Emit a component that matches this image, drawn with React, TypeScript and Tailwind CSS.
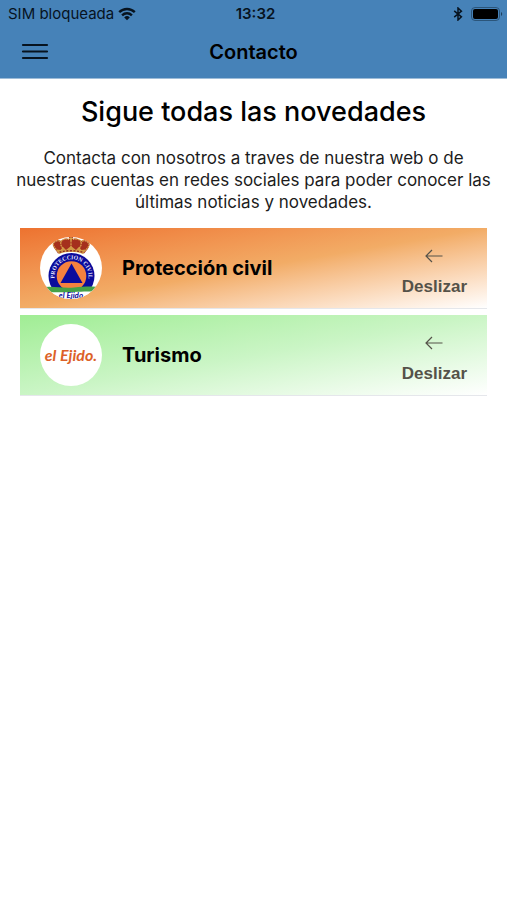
import { useState, type ReactNode } from 'react'

interface Canal {
  id: string
  nombre: string
  fondo: string
  logo: ReactNode
}

function IconoWifi() {
  return (
    <svg viewBox="0 0 18 14" className="h-[14px] w-[18px]" fill="none" stroke="#07131f" strokeWidth="2.4">
      <path d="M1.2 5.2C5.6.9 12.4.9 16.8 5.2" />
      <path d="M4.1 8.3c2.8-2.7 7-2.7 9.8 0" />
      <path d="M9 13.2 6.2 10.4a4 4 0 0 1 5.6 0Z" fill="#07131f" stroke="none" />
    </svg>
  )
}

function IconoBluetooth() {
  return (
    <svg viewBox="0 0 10 14" className="h-[14px] w-[10px]" fill="none" stroke="#07131f" strokeWidth="1.5">
      <path d="m1.2 3.8 7.2 6L5 13V1l3.4 3.2-7.2 6" />
    </svg>
  )
}

function IconoBateria() {
  return (
    <svg viewBox="0 0 32 14" className="h-[14px] w-8">
      <rect x="0.5" y="0.5" width="28" height="13" rx="3.5" fill="none" stroke="#20425f" strokeOpacity="0.7" />
      <rect x="2" y="2" width="25" height="10" rx="2" fill="#000" />
      <path d="M30 5c1.6.6 1.6 3.4 0 4Z" fill="#20425f" />
    </svg>
  )
}

function LogoProteccion() {
  return (
    <svg viewBox="0 0 62 62" className="size-[62px] shrink-0" aria-hidden="true">
      <defs>
        <clipPath id="circulo"><circle cx="31" cy="31" r="31" /></clipPath>
        <path id="arco" d="M14.6 41a17 17 0 1 1 33.8 0" />
      </defs>
      <circle cx="31" cy="31" r="31" fill="#fff" />
      <g clipPath="url(#circulo)">
        <circle cx="31.5" cy="39" r="23" fill="#0b0b9c" />
        <circle cx="31.5" cy="39" r="14.8" fill="#f5813f" />
        <path d="M31.5 26.5 20.5 46h22Z" fill="#0b0b9c" />
        <text fill="#e6e6fa" fontFamily="Liberation Serif, serif" fontWeight="700" fontSize="5.8">
          <textPath href="#arco" startOffset="50%" textAnchor="middle">PROTECCION CIVIL</textPath>
        </text>
        {/* corona */}
        <path d="M18 16.5C15 12 11 8 14 5c3-3 6-2 7-1 2-3 6-3 8-2V0h4v2c3-1 6 0 8 2 3-2 6-1 8 1 2 4-2 8-5 11.5-8-3-18-3-26 0Z" fill="#a5301d" />
        <path d="M18 14.5C14 10 12 8 14 5.5c2-2.5 5-2 7-1 2-2.5 5-3 8-2M44 14.5c5-4.5 6-6.5 4-9-2-2.5-5-2-7-1-2-2.5-5-3-8-2M21 5c-1 3 1 6 4 8M41 5c1 3-1 6-4 8M31 1v10" fill="none" stroke="#d9a54c" strokeWidth="1.2" strokeDasharray="2 0.6" />
        <path d="m16.5 12.5 4 .5 2.5-3 3 3 5-4 5 4 3-3 2.5 3 4-.5-2.5 4.500c-7-3-17-3-24 0Z" fill="#d29b46" />
        <path d="M19.5 15.2c7-2 16-2 23 0" fill="none" stroke="#8e2b20" strokeWidth="1.4" strokeDasharray="2 1.5" />
        <path d="M29 1.5h4M31 0v4" stroke="#d9a54c" strokeWidth="1.2" />
        {/* banda verde y base */}
        <path d="M0 52h62v10H0Z" fill="#fff" />
        <path d="M0 50.5c13-2 22 1 34 0 11-1 18-1.5 28 0v4c-12 0-18 0-28 .5-12 1-20-.5-34 .5Z" fill="#45a148" />
        <text x="31" y="61" textAnchor="middle" fill="#0b0b9c" fontFamily="Lato, sans-serif" fontStyle="italic" fontWeight="700" fontSize="8">el Ejido</text>
      </g>
    </svg>
  )
}

function LogoEjido() {
  return (
    <svg viewBox="0 0 62 62" className="size-[62px] shrink-0" role="img" aria-label="El Ejido">
      <circle cx="31" cy="31" r="31" fill="#fff" />
      <text x="31" y="37" textAnchor="middle" fill="#dc6128" fontFamily="Lato, sans-serif" fontStyle="italic" fontWeight="700" fontSize="16">el Ejido.</text>
    </svg>
  )
}

const canales: Canal[] = [
  {
    id: 'proteccion',
    nombre: 'Protección civil',
    fondo: 'bg-linear-to-br from-[#ed722f] via-[#f2ac66] to-white',
    logo: <LogoProteccion />,
  },
  {
    id: 'turismo',
    nombre: 'Turismo',
    fondo: 'bg-linear-to-br from-[#a0ed94] via-[#caf5c5] to-white',
    logo: <LogoEjido />,
  },
]

function FilaCanal({ canal }: { canal: Canal }) {
  return (
    <li className={`flex h-[81px] items-center border-b border-gray-200 px-5 ${canal.fondo}`}>
      {canal.logo}
      <h2 className="ml-5 flex-1 text-xl font-bold leading-6">{canal.nombre}</h2>
      <div className="flex flex-col items-center gap-3 pt-3 text-[#555249]">
        <svg viewBox="0 0 18 14" className="h-[14px] w-[18px]" fill="none" stroke="currentColor" strokeWidth="1.2">
          <path d="M17.5 7H1M7 1 1 7l6 6" />
        </svg>
        <span className="font-['Liberation_Sans',sans-serif] text-[17px] font-bold leading-6">Deslizar</span>
      </div>
    </li>
  )
}

export default function App() {
  const [abierto, setAbierto] = useState(false)

  return (
    <div className="min-h-screen bg-white font-[Inter,sans-serif] text-black">
      <header className="border-b border-[#9dbcd8] bg-[#4682b8]">
        {/* barra de estado */}
        <div className="grid h-7 grid-cols-3 items-center pl-2 pr-1 text-[15px] leading-5 text-[#07131f]">
          <div className="flex items-center gap-1 whitespace-nowrap">
            <span>SIM bloqueada</span>
            <IconoWifi />
          </div>
          <span className="text-center font-semibold">13:32</span>
          <div className="flex items-center justify-end gap-2">
            <IconoBluetooth />
            <IconoBateria />
          </div>
        </div>

        <div className="grid h-[50px] grid-cols-3 items-center px-5 pb-[2px]">
          <button type="button" aria-label="Menú" aria-expanded={abierto} onClick={() => setAbierto(!abierto)} className="w-fit">
            <svg viewBox="0 0 30 20" className="h-5 w-[30px]" stroke="#07131f" strokeWidth="2.2" strokeLinecap="round">
              <path d="M3 3h24M3 9.5h24M3 16h24" />
            </svg>
          </button>
          <h1 className="text-center text-xl font-semibold">Contacto</h1>
        </div>
      </header>

      <main className="px-4 pt-[17px]">
        <p className="text-center text-[27px] font-medium leading-8">Sigue todas las novedades</p>
        <p className="mt-[19px] text-center text-[17px] leading-[22px] text-[#1c1c1c]">
          Contacta con nosotros a traves de nuestra web o de nuestras cuentas en redes sociales para poder conocer las
          últimas noticias y novedades.
        </p>
        <ul className="mx-1 mt-[15px] space-y-[6px]">
          {canales.map(c => <FilaCanal key={c.id} canal={c} />)}
        </ul>
      </main>
    </div>
  )
}
